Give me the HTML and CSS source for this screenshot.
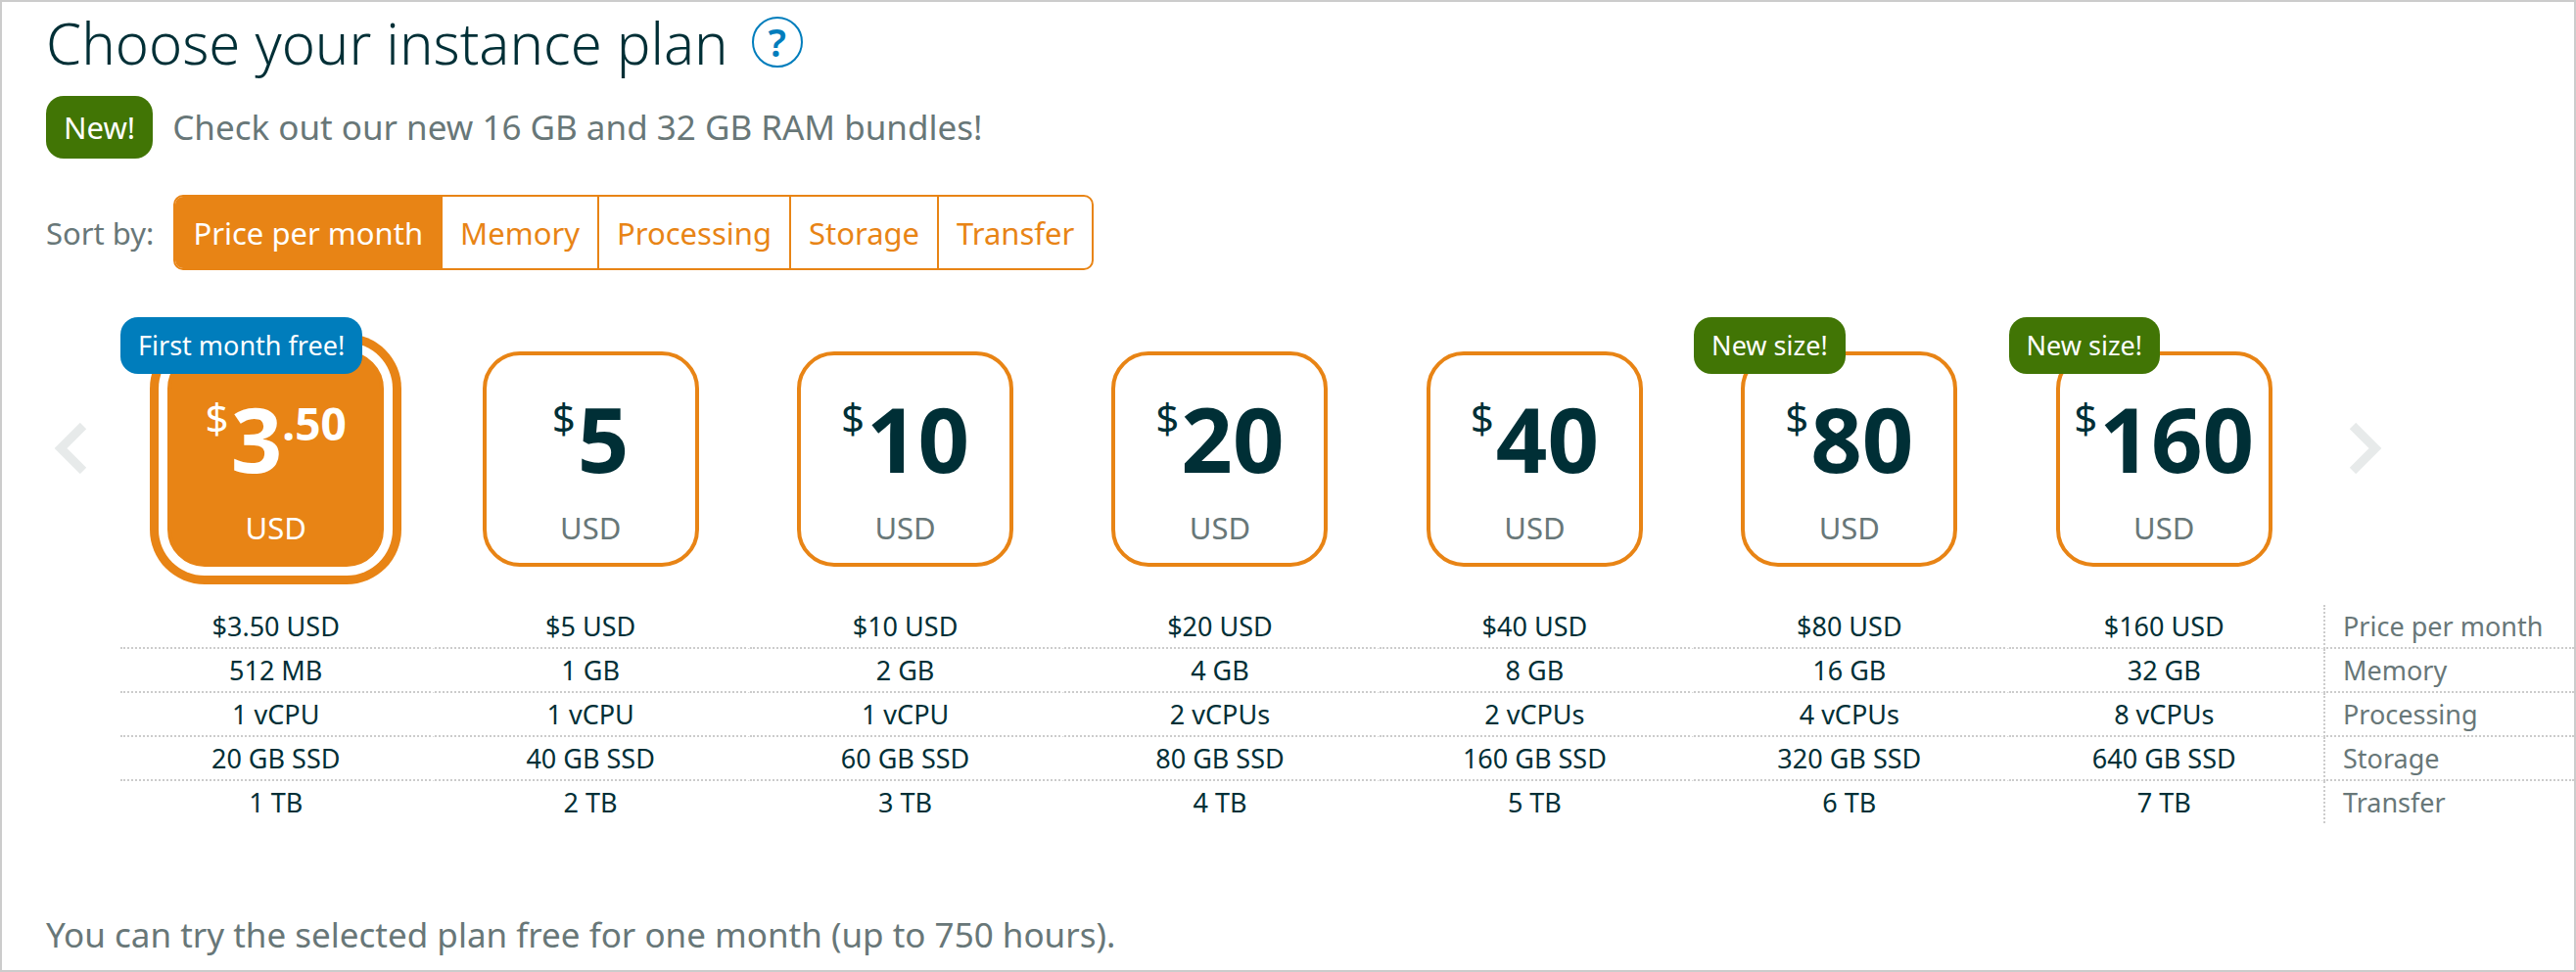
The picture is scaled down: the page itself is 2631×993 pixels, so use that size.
FILE: index.html
```html
<!DOCTYPE html>
<html lang="en">
<head>
    <meta charset="UTF-8">
    <title>Choose your instance plan</title>
    <link rel="stylesheet" href="styles.css">
</head>
<body>
<main class="page">
    <div class="heading">
        <h1>Choose your instance plan</h1>
        <button class="help" aria-label="Help">?</button>
    </div>

    <p class="notice"><span class="tag">New!</span> Check out our new 16 GB and 32 GB RAM bundles!</p>

    <div class="sort">
        <span>Sort by:</span>
        <div class="sort-options">
            <button class="active">Price per month</button>
            <button>Memory</button>
            <button>Processing</button>
            <button>Storage</button>
            <button>Transfer</button>
        </div>
    </div>

    <div class="carousel">
        <button class="arrow prev" aria-label="Previous plans">
            <svg width="34" height="52" viewBox="0 0 34 52"><path d="M30 3L7 26L30 49"/></svg>
        </button>
        <table class="plans">
            <thead>
            <tr>
                <th>
                    <span class="badge free">First month free!</span>
                    <button class="plan selected">
                        <span class="price"><span class="sign">$</span>3<span class="cents">.50</span></span>
                        <span class="currency">USD</span>
                    </button>
                </th>
                <th>
                    <button class="plan">
                        <span class="price"><span class="sign">$</span>5</span>
                        <span class="currency">USD</span>
                    </button>
                </th>
                <th>
                    <button class="plan">
                        <span class="price"><span class="sign">$</span>10</span>
                        <span class="currency">USD</span>
                    </button>
                </th>
                <th>
                    <button class="plan">
                        <span class="price"><span class="sign">$</span>20</span>
                        <span class="currency">USD</span>
                    </button>
                </th>
                <th>
                    <button class="plan">
                        <span class="price"><span class="sign">$</span>40</span>
                        <span class="currency">USD</span>
                    </button>
                </th>
                <th>
                    <span class="badge">New size!</span>
                    <button class="plan">
                        <span class="price"><span class="sign">$</span>80</span>
                        <span class="currency">USD</span>
                    </button>
                </th>
                <th>
                    <span class="badge">New size!</span>
                    <button class="plan">
                        <span class="price"><span class="sign">$</span>160</span>
                        <span class="currency">USD</span>
                    </button>
                </th>
                <td class="next-cell">
                    <button class="arrow" aria-label="Next plans">
                        <svg width="34" height="52" viewBox="0 0 34 52"><path d="M4 3L27 26L4 49"/></svg>
                    </button>
                </td>
            </tr>
            </thead>
            <tbody>
            <tr>
                <td>$3.50 USD</td>
                <td>$5 USD</td>
                <td>$10 USD</td>
                <td>$20 USD</td>
                <td>$40 USD</td>
                <td>$80 USD</td>
                <td>$160 USD</td>
                <th scope="row">Price per month</th>
            </tr>
            <tr>
                <td>512 MB</td>
                <td>1 GB</td>
                <td>2 GB</td>
                <td>4 GB</td>
                <td>8 GB</td>
                <td>16 GB</td>
                <td>32 GB</td>
                <th scope="row">Memory</th>
            </tr>
            <tr>
                <td>1 vCPU</td>
                <td>1 vCPU</td>
                <td>1 vCPU</td>
                <td>2 vCPUs</td>
                <td>2 vCPUs</td>
                <td>4 vCPUs</td>
                <td>8 vCPUs</td>
                <th scope="row">Processing</th>
            </tr>
            <tr>
                <td>20 GB SSD</td>
                <td>40 GB SSD</td>
                <td>60 GB SSD</td>
                <td>80 GB SSD</td>
                <td>160 GB SSD</td>
                <td>320 GB SSD</td>
                <td>640 GB SSD</td>
                <th scope="row">Storage</th>
            </tr>
            <tr>
                <td>1 TB</td>
                <td>2 TB</td>
                <td>3 TB</td>
                <td>4 TB</td>
                <td>5 TB</td>
                <td>6 TB</td>
                <td>7 TB</td>
                <th scope="row">Transfer</th>
            </tr>
            </tbody>
        </table>
    </div>

    <p class="trial">You can try the selected plan free for one month (up to 750 hours).</p>
</main>
</body>
</html>
```
FILE: styles.css
```css
* {
    box-sizing: border-box;
}
body {
    margin: 0;
    font-family: 'Noto Sans', 'Open Sans', sans-serif;
    color: #687778;
    background-color: #fff;
}
.page {
    min-height: 100vh;
    border: 2px solid #ccc;
}
button {
    font-family: inherit;
    background: none;
    border: none;
    padding: 0;
    cursor: pointer;
}
.heading {
    display: flex;
    align-items: center;
    gap: 24px;
    height: 82px;
    padding-left: 45px;
}
h1 {
    margin: 0;
    font-size: 58px;
    font-weight: 300;
    color: #002f36;
}
.help {
    width: 52px;
    height: 52px;
    border: 2px solid #007dbc;
    border-radius: 50%;
    color: #007dbc;
    font-size: 40px;
    font-weight: 600;
    line-height: 46px;
}
.notice {
    display: flex;
    align-items: center;
    gap: 20px;
    margin: 14px 0 37px 45px;
    font-size: 35px;
    line-height: 64px;
}
.tag {
    padding: 0 18px;
    border-radius: 18px;
    background-color: #417505;
    color: #fff;
    font-size: 31px;
}
.sort {
    display: flex;
    align-items: center;
    gap: 20px;
    padding-left: 45px;
    font-size: 31px;
}
.sort-options {
    display: flex;
    border: 2px solid #e88415;
    border-radius: 10px;
    overflow: hidden;
}
.sort-options button {
    height: 73px;
    padding: 0 18px;
    border-left: 2px solid #e88415;
    color: #e88415;
    font-size: 31px;
}
.sort-options .active {
    border-left: none;
    background-color: #e88415;
    color: #fff;
}
.carousel {
    display: flex;
    align-items: flex-start;
    margin-top: 48px;
}
.arrow svg {
    display: block;
    fill: none;
    stroke: #e7eaea;
    stroke-width: 9;
}
.prev {
    width: 121px;
    padding: 108px 0 0 53px;
}
.plans {
    flex: 1;
    table-layout: fixed;
    border-collapse: separate;
    border-spacing: 0;
    font-size: 27px;
    line-height: 43px;
    color: #002f36;
}
.plans thead th {
    position: relative;
    height: 294px;
    padding: 35px 4px 0 0;
    vertical-align: top;
}
.plans .next-cell {
    width: 256px;
    padding: 108px 0 0 26px;
    border: none;
    vertical-align: top;
}
.badge {
    position: absolute;
    top: 0;
    left: 0;
    z-index: 1;
    padding: 0 18px;
    border-radius: 18px;
    background-color: #417505;
    color: #fff;
    font-size: 27px;
    font-weight: 400;
    line-height: 58px;
}
.free {
    background-color: #007dbc;
}
.plan {
    display: flex;
    flex-direction: column;
    align-items: center;
    width: 221px;
    height: 220px;
    margin: 0 auto;
    padding-top: 42px;
    border: 4px solid #e88415;
    border-radius: 38px;
    color: #002f36;
}
.price {
    display: flex;
    align-items: flex-start;
    font-size: 92px;
    font-weight: 700;
    line-height: 86px;
}
.sign {
    margin-right: 2px;
    font-size: 42px;
    font-weight: 400;
    line-height: 44px;
}
.cents {
    font-size: 46px;
    line-height: 54px;
}
.currency {
    margin-top: 28px;
    color: #687778;
    font-size: 31px;
    line-height: 40px;
}
.selected {
    background-color: #e88415;
    box-shadow: 0 0 0 9px #fff, 0 0 0 18px #e88415;
    color: #fff;
}
.selected .currency {
    color: #fff;
}
.plans tbody td {
    padding: 0;
    border-right: 4px solid #fff;
    border-bottom: 2px dotted #ccc;
    text-align: center;
}
.plans tbody th {
    padding: 0 0 0 18px;
    border-left: 2px dotted #ccc;
    border-bottom: 2px dotted #ccc;
    color: #687778;
    font-weight: 400;
    text-align: left;
}
.plans tbody tr:last-child > * {
    border-bottom: none;
}
.trial {
    margin: 90px 0 0 45px;
    font-size: 35px;
    line-height: 48px;
}
```
